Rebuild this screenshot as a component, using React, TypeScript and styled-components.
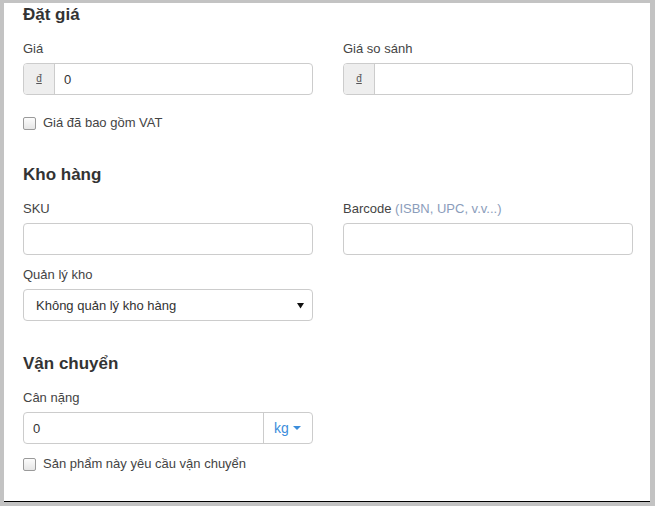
import React from "react";
import styled, { createGlobalStyle } from "styled-components";

const Global = createGlobalStyle`
  html, body {
    margin: 0;
    padding: 0;
    background: #c3c3c3;
  }
  body {
    font-family: "Liberation Sans", Arial, sans-serif;
    font-size: 13px;
    color: #333;
  }
  * { box-sizing: border-box; }
`;

const Panel = styled.div`
  margin: 3px 5px 0 4px;
  height: 499px;
  background: #fff;
  border-bottom: 1px solid #000;
  padding: 2px 17px 0 19px;
`;

const Section = styled.section`
  & + & {
    margin-top: 33px;
  }
`;

const Heading = styled.h3`
  margin: 0 0 15px;
  font-size: 17px;
  line-height: 20px;
  font-weight: bold;
  color: #333;
`;

const Row = styled.div<{ $gap?: number }>`
  display: grid;
  grid-template-columns: 290px 290px;
  column-gap: 30px;
  margin-top: ${(p) => p.$gap ?? 0}px;
`;

const Field = styled.div`
  display: flex;
  flex-direction: column;
`;

const Label = styled.label`
  display: block;
  font-size: 13px;
  line-height: 18px;
  color: #444;
  margin-bottom: 5px;
`;

const Hint = styled.span`
  color: #8b9dbb;
`;

const Group = styled.div`
  display: flex;
  height: 32px;
  border: 1px solid #ccc;
  border-radius: 4px;
  overflow: hidden;
  background: #fff;
`;

const Addon = styled.span`
  flex: 0 0 31px;
  display: flex;
  align-items: center;
  justify-content: center;
  background: #eee;
  border-right: 1px solid #ccc;
  color: #555;
  font-size: 10px;
  text-decoration: underline;
  text-underline-offset: 1px;
  padding-bottom: 2px;
`;

const UnitAddon = styled.span`
  flex: 0 0 49px;
  display: flex;
  align-items: center;
  gap: 4px;
  padding-left: 10px;
  border-left: 1px solid #ccc;
  color: #3b8ddb;
  font-size: 14px;
`;

const Input = styled.input`
  flex: 1;
  min-width: 0;
  border: none;
  outline: none;
  padding: 0 9px;
  font-family: "Liberation Sans", Arial, sans-serif;
  font-size: 13px;
  color: #333;
  background: transparent;
`;

const TextBox = styled.input`
  height: 32px;
  width: 100%;
  border: 1px solid #ccc;
  border-radius: 4px;
  padding: 0 9px;
  font-family: "Liberation Sans", Arial, sans-serif;
  font-size: 13px;
  outline: none;
`;

const SelectBox = styled.div`
  display: flex;
  align-items: center;
  height: 32px;
  border: 1px solid #ccc;
  border-radius: 4px;
  padding: 0 8px 0 12px;
`;

const Select = styled.select`
  flex: 1;
  appearance: none;
  -webkit-appearance: none;
  border: none;
  outline: none;
  background: transparent;
  padding: 0;
  font-family: "Liberation Sans", Arial, sans-serif;
  font-size: 13px;
  color: #333;
`;

const CheckRow = styled.label<{ $gap: number }>`
  display: flex;
  align-items: center;
  gap: 7px;
  margin-top: ${(p) => p.$gap}px;
  font-size: 13px;
  line-height: 18px;
  color: #444;
`;

const Check = styled.span`
  width: 13px;
  height: 13px;
  border: 1px solid #9a9a9a;
  border-radius: 2px;
  background: linear-gradient(#fcfcfc, #e6e6e6);
  flex: 0 0 13px;
`;

export default function App() {
  return (
    <>
      <Global />
      <Panel>
        <Section>
          <Heading>Đặt giá</Heading>
          <Row>
            <Field>
              <Label>Giá</Label>
              <Group>
                <Addon>đ</Addon>
                <Input defaultValue="0" />
              </Group>
            </Field>
            <Field>
              <Label>Giá so sánh</Label>
              <Group>
                <Addon>đ</Addon>
                <Input defaultValue="" />
              </Group>
            </Field>
          </Row>
          <CheckRow $gap={19}>
            <Check />
            Giá đã bao gồm VAT
          </CheckRow>
        </Section>

        <Section>
          <Heading>Kho hàng</Heading>
          <Row>
            <Field>
              <Label>SKU</Label>
              <TextBox />
            </Field>
            <Field>
              <Label>
                Barcode <Hint>(ISBN, UPC, v.v...)</Hint>
              </Label>
              <TextBox />
            </Field>
          </Row>
          <Row $gap={11}>
            <Field>
              <Label>Quản lý kho</Label>
              <SelectBox>
                <Select defaultValue="none">
                  <option value="none">Không quản lý kho hàng</option>
                </Select>
                <svg width="7" height="7" viewBox="0 0 7 7">
                  <path d="M0 1 L7 1 L3.5 6.5 Z" fill="#111" />
                </svg>
              </SelectBox>
            </Field>
          </Row>
        </Section>

        <Section>
          <Heading>Vận chuyển</Heading>
          <Row>
            <Field>
              <Label>Cân nặng</Label>
              <Group>
                <Input defaultValue="0" />
                <UnitAddon>
                  kg
                  <svg width="8" height="4" viewBox="0 0 8 4">
                    <path d="M0 0 L8 0 L4 4 Z" fill="#3b8ddb" />
                  </svg>
                </UnitAddon>
              </Group>
            </Field>
          </Row>
          <CheckRow $gap={11}>
            <Check />
            Sản phẩm này yêu cầu vận chuyển
          </CheckRow>
        </Section>
      </Panel>
    </>
  );
}
